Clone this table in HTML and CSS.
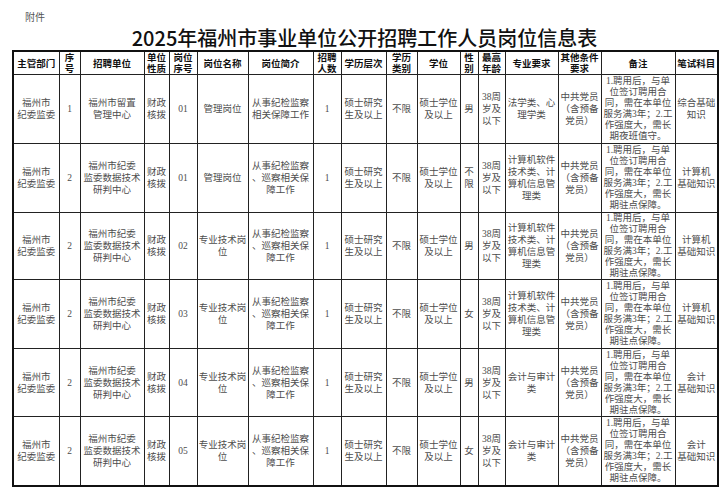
FILE: index.html
```html
<!DOCTYPE html>
<html lang="zh-CN">
<head>
<meta charset="utf-8">
<link rel="stylesheet" href="styles.css">
</head>
<body>
<div class="doc">
  <div class="fujian">附件</div>
  <h1 class="title">2025年福州市事业单位公开招聘工作人员岗位信息表</h1>
  <table class="jobs">
    <colgroup>
      <col style="width:46px"><col style="width:21px"><col style="width:64px"><col style="width:25px">
      <col style="width:28px"><col style="width:51px"><col style="width:65px"><col style="width:28px">
      <col style="width:45px"><col style="width:31px"><col style="width:43px"><col style="width:18px">
      <col style="width:27px"><col style="width:53px"><col style="width:43px"><col style="width:74px">
      <col style="width:43px">
    </colgroup>
    <thead>
      <tr class="head">
        <th>主管部门</th><th>序<br>号</th><th>招聘单位</th><th>单位<br>性质</th><th>岗位<br>序号</th>
        <th>岗位名称</th><th>岗位简介</th><th>招聘<br>人数</th><th>学历层次</th><th>学历<br>类别</th>
        <th>学位</th><th>性<br>别</th><th>最高<br>年龄</th><th>专业要求</th><th>其他条件<br>要求</th>
        <th>备注</th><th>笔试科目</th>
      </tr>
    </thead>
    <tbody>
      <tr class="r1">
        <td>福州市<br>纪委监委</td><td>1</td><td>福州市留置<br>管理中心</td><td>财政<br>核拨</td><td>01</td>
        <td>管理岗位</td><td>从事纪检监察<br>相关保障工作</td><td>1</td><td>硕士研究<br>生及以上</td><td>不限</td>
        <td>硕士学位<br>及以上</td><td>男</td><td>38周<br>岁及<br>以下</td><td>法学类、心<br>理学类</td>
        <td>中共党员<br>（含预备<br>党员）</td>
        <td class="note">1.聘用后，与单<br>位签订聘用合<br>同，需在本单位<br>服务满3年；2.工<br>作强度大，需长<br>期夜班值守。</td>
        <td>综合基础<br>知识</td>
      </tr>
      <tr class="r2">
        <td>福州市<br>纪委监委</td><td>2</td><td>福州市纪委<br>监委数据技术<br>研判中心</td><td>财政<br>核拨</td><td>01</td>
        <td>管理岗位</td><td>从事纪检监察<br>、巡察相关保<br>障工作</td><td>1</td><td>硕士研究<br>生及以上</td><td>不限</td>
        <td>硕士学位<br>及以上</td><td>不<br>限</td><td>38周<br>岁及<br>以下</td><td>计算机软件<br>技术类、计<br>算机信息管<br>理类</td>
        <td>中共党员<br>（含预备<br>党员）</td>
        <td class="note">1.聘用后，与单<br>位签订聘用合<br>同，需在本单位<br>服务满3年；2.工<br>作强度大，需长<br>期驻点保障。</td>
        <td>计算机<br>基础知识</td>
      </tr>
      <tr class="r3">
        <td>福州市<br>纪委监委</td><td>2</td><td>福州市纪委<br>监委数据技术<br>研判中心</td><td>财政<br>核拨</td><td>02</td>
        <td>专业技术岗<br>位</td><td>从事纪检监察<br>、巡察相关保<br>障工作</td><td>1</td><td>硕士研究<br>生及以上</td><td>不限</td>
        <td>硕士学位<br>及以上</td><td>男</td><td>38周<br>岁及<br>以下</td><td>计算机软件<br>技术类、计<br>算机信息管<br>理类</td>
        <td>中共党员<br>（含预备<br>党员）</td>
        <td class="note">1.聘用后，与单<br>位签订聘用合<br>同，需在本单位<br>服务满3年；2.工<br>作强度大，需长<br>期驻点保障。</td>
        <td>计算机<br>基础知识</td>
      </tr>
      <tr class="r4">
        <td>福州市<br>纪委监委</td><td>2</td><td>福州市纪委<br>监委数据技术<br>研判中心</td><td>财政<br>核拨</td><td>03</td>
        <td>专业技术岗<br>位</td><td>从事纪检监察<br>、巡察相关保<br>障工作</td><td>1</td><td>硕士研究<br>生及以上</td><td>不限</td>
        <td>硕士学位<br>及以上</td><td>女</td><td>38周<br>岁及<br>以下</td><td>计算机软件<br>技术类、计<br>算机信息管<br>理类</td>
        <td>中共党员<br>（含预备<br>党员）</td>
        <td class="note">1.聘用后，与单<br>位签订聘用合<br>同，需在本单位<br>服务满3年；2.工<br>作强度大，需长<br>期驻点保障。</td>
        <td>计算机<br>基础知识</td>
      </tr>
      <tr class="r5">
        <td>福州市<br>纪委监委</td><td>2</td><td>福州市纪委<br>监委数据技术<br>研判中心</td><td>财政<br>核拨</td><td>04</td>
        <td>专业技术岗<br>位</td><td>从事纪检监察<br>、巡察相关保<br>障工作</td><td>1</td><td>硕士研究<br>生及以上</td><td>不限</td>
        <td>硕士学位<br>及以上</td><td>男</td><td>38周<br>岁及<br>以下</td><td>会计与审计<br>类</td>
        <td>中共党员<br>（含预备<br>党员）</td>
        <td class="note">1.聘用后，与单<br>位签订聘用合<br>同，需在本单位<br>服务满3年；2.工<br>作强度大，需长<br>期驻点保障。</td>
        <td>会计<br>基础知识</td>
      </tr>
      <tr class="r6">
        <td>福州市<br>纪委监委</td><td>2</td><td>福州市纪委<br>监委数据技术<br>研判中心</td><td>财政<br>核拨</td><td>05</td>
        <td>专业技术岗<br>位</td><td>从事纪检监察<br>、巡察相关保<br>障工作</td><td>1</td><td>硕士研究<br>生及以上</td><td>不限</td>
        <td>硕士学位<br>及以上</td><td>女</td><td>38周<br>岁及<br>以下</td><td>会计与审计<br>类</td>
        <td>中共党员<br>（含预备<br>党员）</td>
        <td class="note">1.聘用后，与单<br>位签订聘用合<br>同，需在本单位<br>服务满3年；2.工<br>作强度大，需长<br>期驻点保障。</td>
        <td>会计<br>基础知识</td>
      </tr>
    </tbody>
  </table>
</div>
</body>
</html>
```
FILE: styles.css
```css
html, body {
  margin: 0;
  padding: 0;
  background: #fff;
}
.doc {
  width: 728px;
  padding-top: 12px;
}
.fujian {
  margin-left: 25px;
  font-family: "Liberation Serif", "Noto Sans CJK SC", serif;
  font-size: 10px;
  line-height: 12px;
  height: 12px;
  color: #555;
}
.title {
  margin: 2px 0 0 0;
  height: 24px;
  font-family: "Noto Sans CJK SC", sans-serif;
  font-weight: 500;
  font-size: 20px;
  line-height: 24px;
  text-align: center;
  color: #111;
  width: 729px;
}
.jobs {
  margin-left: 12px;
  width: 705px;
  table-layout: fixed;
  border-collapse: collapse;
  border: 2px solid #111;
}
.jobs th, .jobs td {
  border: 1px solid #222;
  padding: 0;
  text-align: center;
  vertical-align: middle;
  white-space: nowrap;
  overflow: visible;
}
.jobs th {
  font-family: "Liberation Sans", "Noto Sans CJK SC", sans-serif;
  font-weight: 700;
  font-size: 9.5px;
  line-height: 11px;
  color: #111;
}
.jobs td {
  font-family: "Liberation Serif", "Noto Sans CJK SC", serif;
  font-size: 9.5px;
  line-height: 12px;
  color: #4d4d4d;
}
.jobs td.note {
  line-height: 11px;
}
.head { height: 22px; }
.r1 { height: 69px; }
.r2 { height: 69px; }
.r3 { height: 67px; }
.r4 { height: 69px; }
.r5 { height: 68px; }
.r6 { height: 69px; }
```
